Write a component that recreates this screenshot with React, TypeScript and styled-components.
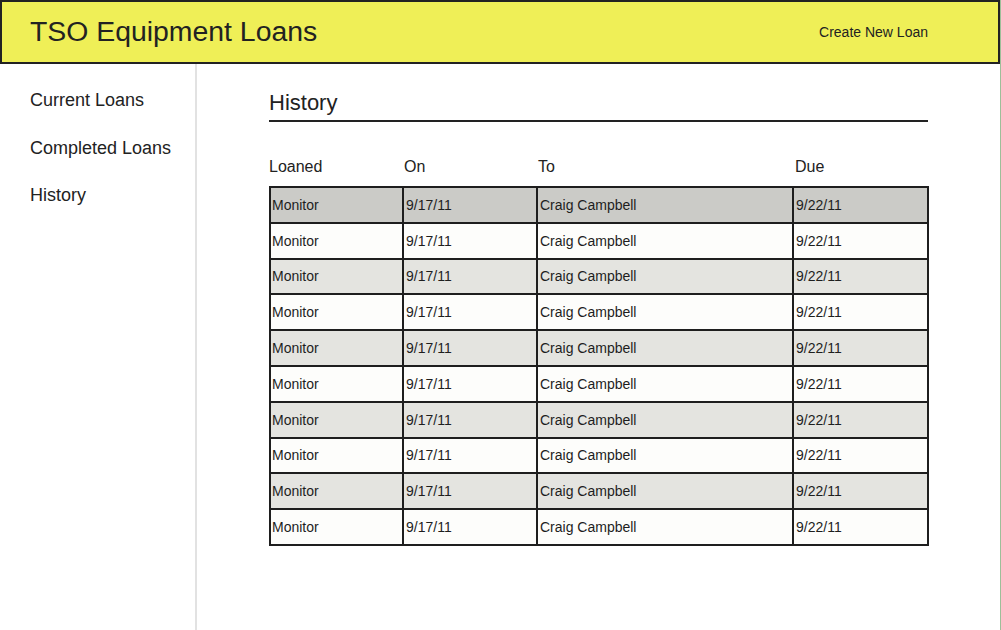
import React from "react";
import styled, { createGlobalStyle } from "styled-components";

const GlobalStyle = createGlobalStyle`
  html, body {
    margin: 0;
    padding: 0;
    background: #ffffff;
    font-family: "Liberation Sans", Arial, Helvetica, sans-serif;
    color: #222222;
  }
  * { box-sizing: border-box; }
`;

const Page = styled.div`
  width: 1001px;
  min-height: 630px;
  border-right: 1px solid #9dbf99;
  display: flex;
  flex-direction: column;
`;

const Header = styled.header`
  height: 64px;
  background: #efef57;
  border: 2px solid #222222;
  display: flex;
  align-items: center;
  justify-content: space-between;
  padding: 0 70px 0 28px;
`;

const Title = styled.h1`
  margin: 0;
  font-size: 28.4px;
  font-weight: normal;
  color: #222222;
  position: relative;
  top: -1px;
`;

const HeaderLink = styled.a`
  font-size: 14px;
  color: #222222;
  text-decoration: none;
`;

const Body = styled.div`
  flex: 1;
  display: flex;
`;

const Sidebar = styled.nav`
  width: 197px;
  min-height: 566px;
  border-right: 2px solid #e2e2e2;
  display: flex;
  flex-direction: column;
  gap: 26.5px;
  padding: 26px 0 0 30px;
`;

const NavItem = styled.a`
  font-size: 18px;
  line-height: 21px;
  color: #222222;
  text-decoration: none;
`;

const Main = styled.main`
  flex: 1;
  padding: 26px 0 0 72px;
`;

const Heading = styled.h2`
  width: 659px;
  margin: 0;
  font-size: 22px;
  font-weight: normal;
  line-height: 26px;
  padding-bottom: 4px;
  border-bottom: 2px solid #222222;
`;

const ColumnHeaders = styled.div`
  display: grid;
  grid-template-columns: 135px 134px 257px 133px;
  width: 659px;
  margin-top: 35px;
  height: 29px;
  font-size: 16px;
  line-height: 19px;
`;

const ColumnHeader = styled.div``;

const Table = styled.table`
  width: 658px;
  border-collapse: collapse;
  border: 2px solid #1e1e1e;
  table-layout: fixed;
`;

const Row = styled.tr<{ $tone: "first" | "odd" | "even" }>`
  height: 35.8px;
  background: ${(p) =>
    p.$tone === "first" ? "#cbcbc7" : p.$tone === "odd" ? "#e4e4e0" : "#fdfdfb"};
`;

const Cell = styled.td<{ $w: number }>`
  width: ${(p) => p.$w}px;
  border: 2px solid #1e1e1e;
  padding: 0 1px 0 2px;
  font-size: 14px;
  color: #1e1e1e;
  vertical-align: middle;

  &:first-child {
    padding-left: 1px;
  }
`;

const rows = Array.from({ length: 10 }, () => ({
  item: "Monitor",
  on: "9/17/11",
  to: "Craig Campbell",
  due: "9/22/11",
}));

export default function App() {
  return (
    <>
      <GlobalStyle />
      <Page>
        <Header>
          <Title>TSO Equipment Loans</Title>
          <HeaderLink href="#">Create New Loan</HeaderLink>
        </Header>
        <Body>
          <Sidebar>
            <NavItem href="#">Current Loans</NavItem>
            <NavItem href="#">Completed Loans</NavItem>
            <NavItem href="#">History</NavItem>
          </Sidebar>
          <Main>
            <Heading>History</Heading>
            <ColumnHeaders>
              <ColumnHeader>Loaned</ColumnHeader>
              <ColumnHeader>On</ColumnHeader>
              <ColumnHeader>To</ColumnHeader>
              <ColumnHeader>Due</ColumnHeader>
            </ColumnHeaders>
            <Table>
              <tbody>
                {rows.map((r, i) => (
                  <Row key={i} $tone={i === 0 ? "first" : i % 2 === 0 ? "odd" : "even"}>
                    <Cell $w={133}>{r.item}</Cell>
                    <Cell $w={134}>{r.on}</Cell>
                    <Cell $w={256}>{r.to}</Cell>
                    <Cell $w={135}>{r.due}</Cell>
                  </Row>
                ))}
              </tbody>
            </Table>
          </Main>
        </Body>
      </Page>
    </>
  );
}
